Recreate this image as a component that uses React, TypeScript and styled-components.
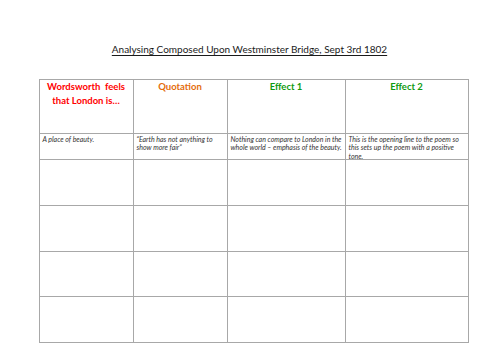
import React from "react";
import styled, { createGlobalStyle } from "styled-components";

const Global = createGlobalStyle`
  html, body { margin: 0; padding: 0; background: #ffffff; }
  body { font-family: Lato, "Open Sans", sans-serif; }
`;

const Page = styled.div`
  width: 500px;
  height: 354px;
  display: flex;
  flex-direction: column;
  align-items: center;
  box-sizing: border-box;
  padding-top: 43px;
  overflow: hidden;
`;

const Title = styled.h1`
  margin: 0;
  font-family: Lato, sans-serif;
  font-weight: 400;
  font-size: 10px;
  line-height: 13px;
  color: #1a1a1a;
  text-decoration: underline;
  text-underline-offset: 2px;
  margin-left: -1px;
`;

const Grid = styled.div`
  margin-top: 23px;
  margin-left: 7px;
  display: grid;
  grid-template-columns: 94px 94px 118px 123px;
  grid-template-rows: 54px 26px 46px 46px 45px 46px;
  border-top: 1px solid #a8a8a8;
  border-left: 1px solid #a8a8a8;
  box-sizing: border-box;
`;

const Cell = styled.div`
  border-right: 1px solid #a8a8a8;
  border-bottom: 1px solid #a8a8a8;
  box-sizing: border-box;
  padding: 2px 3px;
`;

const HeadCell = styled(Cell)<{ $color: string }>`
  text-align: center;
  font-weight: 700;
  font-size: 9.5px;
  line-height: 14px;
  color: ${(p) => p.$color};
  padding-top: 0px;
  white-space: pre-wrap;
`;

const DataCell = styled(Cell)`
  font-style: italic;
  font-size: 7px;
  line-height: 8.4px;
  color: #333333;
  padding: 1px 2px 0 3px;
  white-space: nowrap;
`;

const headers = [
  { text: "Wordsworth  feels\nthat London is\u2026", color: "#ff0000" },
  { text: "Quotation", color: "#e46c0a" },
  { text: "Effect 1", color: "#109a10" },
  { text: "Effect 2", color: "#109a10" },
];

const row: string[][] = [
  ["A place of beauty."],
  ["\u201cEarth has not anything to", "show more fair\u201d"],
  ["Nothing can compare to London in the", "whole world \u2013 emphasis of the beauty."],
  ["This is the opening line to the poem so", "this sets up the poem with a positive", "tone."],
];

export default function App() {
  return (
    <>
      <Global />
      <Page>
        <Title>Analysing Composed Upon Westminster Bridge, Sept 3rd 1802</Title>
        <Grid>
          {headers.map((h) => (
            <HeadCell key={h.text} $color={h.color}>
              {h.text}
            </HeadCell>
          ))}
          {row.map((lines, i) => (
            <DataCell key={i}>
              {lines.map((l, j) => (
                <React.Fragment key={j}>
                  {j > 0 && <br />}
                  {l}
                </React.Fragment>
              ))}
            </DataCell>
          ))}
          {Array.from({ length: 16 }).map((_, i) => (
            <Cell key={i} />
          ))}
        </Grid>
      </Page>
    </>
  );
}
